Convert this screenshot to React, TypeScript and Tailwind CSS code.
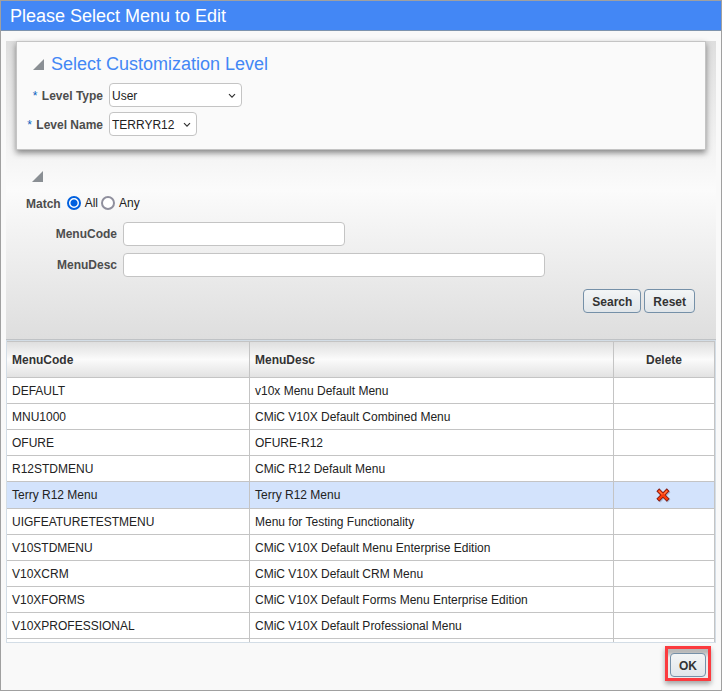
import { useState } from "react";
import type { ReactNode } from "react";
import clsx from "clsx";

type MenuRow = { code: string; desc: string };

const menus: MenuRow[] = [
  { code: "DEFAULT", desc: "v10x Menu Default Menu" },
  { code: "MNU1000", desc: "CMiC V10X Default Combined Menu" },
  { code: "OFURE", desc: "OFURE-R12" },
  { code: "R12STDMENU", desc: "CMiC R12 Default Menu" },
  { code: "Terry R12 Menu", desc: "Terry R12 Menu" },
  { code: "UIGFEATURETESTMENU", desc: "Menu for Testing Functionality" },
  { code: "V10STDMENU", desc: "CMiC V10X Default Menu Enterprise Edition" },
  { code: "V10XCRM", desc: "CMiC V10X Default CRM Menu" },
  { code: "V10XFORMS", desc: "CMiC V10X Default Forms Menu Enterprise Edition" },
  { code: "V10XPROFESSIONAL", desc: "CMiC V10X Default Professional Menu" },
];

function Disclosure({ label }: { label: string }) {
  return (
    <button type="button" aria-label={label} className="block shrink-0">
      <svg width="11" height="11" viewBox="0 0 11 11" className="block">
        <path d="M11 0V11H0Z" fill="#8a8f94" />
      </svg>
    </button>
  );
}

function SelectField({ id, label, value, width }: { id: string; label: string; value: string; width: string }) {
  return (
    <div className="flex items-center gap-[6px]">
      <label htmlFor={id} className="w-[86px] pt-px text-right font-bold text-[#4d4d4d]">
        <span className="mr-px font-normal text-[#0a5fbf]">*</span> {label}
      </label>
      <div className={clsx("relative h-6", width)}>
        <select
          id={id}
          defaultValue={value}
          className="block h-full w-full appearance-none rounded border border-[#c4c4c4] bg-white pt-px pl-[2px] text-[#222]"
        >
          <option>{value}</option>
        </select>
        <svg width="8" height="6" viewBox="0 0 8 6" className="pointer-events-none absolute top-[10px] right-[6px]">
          <path d="M1 1.2L4 4.2L7 1.2" fill="none" stroke="#333" strokeWidth="1.2" />
        </svg>
      </div>
    </div>
  );
}

function MatchRadio({ label, checked, onChange }: { label: string; checked: boolean; onChange: () => void }) {
  return (
    <label className="flex items-center gap-1 text-[#222]">
      <input
        type="radio"
        name="match"
        checked={checked}
        onChange={onChange}
        className="size-[14px] appearance-none rounded-full border-2 border-[#8f8f9d] bg-white checked:border-[#0060df] checked:bg-[radial-gradient(circle,#0060df_3px,#fff_4px)]"
      />
      {label}
    </label>
  );
}

function SearchField({ id, label, width }: { id: string; label: string; width: string }) {
  return (
    <div className="flex items-center gap-[6px]">
      <label htmlFor={id} className="w-[91px] shrink-0 text-right font-bold text-[#4d4d4d]">{label}</label>
      <input id={id} type="text" className={clsx("h-6 rounded border border-[#c4c4c4] bg-white px-1", width)} />
    </div>
  );
}

function Button({ children }: { children: ReactNode }) {
  return (
    <button
      type="button"
      className="h-6 rounded border border-[#7590a8] bg-linear-to-b from-[#f3f5f6] to-[#e1e6ea] px-2 pt-px font-bold text-[#333]"
    >
      {children}
    </button>
  );
}

function DeleteIcon() {
  return (
    <svg width="15" height="15" viewBox="0 0 15 15" className="block">
      <path d="M4.4 4.4L11.6 11.6M11.6 4.4L4.4 11.6" stroke="#8fa0bd" strokeWidth="4" strokeLinecap="square" opacity="0.6" />
      <path d="M3.2 3.2L10.8 10.8M10.8 3.2L3.2 10.8" stroke="#7d1a14" strokeWidth="4" strokeLinecap="square" />
      <path d="M3.2 3.2L10.8 10.8M10.8 3.2L3.2 10.8" stroke="#fb3c0c" strokeWidth="2.4" strokeLinecap="square" />
      <path d="M2.8 2.8L6.4 6.4M11 3L8 6" stroke="#ff7a45" strokeWidth="1.1" />
    </svg>
  );
}

export default function App() {
  const [match, setMatch] = useState("all");
  const [selected, setSelected] = useState("Terry R12 Menu");

  return (
    <div className="flex h-screen flex-col border border-[#a0a0a0] bg-[#f9f9f9] font-['Liberation_Sans',Arial,sans-serif] text-xs text-[#333]">
      <header className="h-[30px] shrink-0 border-b border-[#7d93ad] bg-[#4387f5] px-[9px]">
        <h1 className="text-lg leading-[30px] text-white">Please Select Menu to Edit</h1>
      </header>

      <main className="mx-[5px] mt-[10px] flex min-h-0 flex-1 flex-col">
        <div className="shrink-0 border-b border-[#bfc2c5] bg-linear-to-b from-[#dedede] via-[#fbfbfb] to-[#dedede]">
          {/* Customization level */}
          <section className="mx-[10px] border border-[#c4c4c4] bg-[#fafafa] pb-[13px] shadow-[0_3px_6px_rgba(0,0,0,0.45)]">
            <div className="flex items-center gap-[7px] pt-2 pl-4">
              <Disclosure label="Toggle customization level" />
              <h2 className="text-lg leading-7 text-[#4387f5]">Select Customization Level</h2>
            </div>
            <div className="mt-[5px] flex flex-col gap-[5px]">
              <SelectField id="level-type" label="Level Type" value="User" width="w-[133px]" />
              <SelectField id="level-name" label="Level Name" value="TERRYR12" width="w-[88px]" />
            </div>
          </section>

          {/* Search criteria */}
          <section className="pt-[21px] pr-[21px] pb-[26px] pl-[20px]">
            <div className="pl-[6px]">
              <Disclosure label="Toggle search" />
            </div>
            <fieldset className="mt-3 flex h-[18px] items-center">
              <legend className="float-left mr-[6px] pt-px font-bold text-[#4d4d4d]">Match</legend>
              <div className="flex gap-[3px]">
                <MatchRadio label="All" checked={match === "all"} onChange={() => setMatch("all")} />
                <MatchRadio label="Any" checked={match === "any"} onChange={() => setMatch("any")} />
              </div>
            </fieldset>
            <div className="mt-[10px] flex flex-col gap-[7px]">
              <SearchField id="menu-code" label="MenuCode" width="w-[222px]" />
              <SearchField id="menu-desc" label="MenuDesc" width="w-[422px]" />
            </div>
            <div className="mt-3 flex justify-end gap-[3px]">
              <Button>Search</Button>
              <Button>Reset</Button>
            </div>
          </section>
        </div>

        <div className="min-h-0 flex-1 overflow-hidden border border-[#d3dde6] bg-white">
          <table className="w-full table-fixed border-separate border-spacing-0">
            <colgroup>
              <col className="w-[243px]" />
              <col />
              <col className="w-[101px]" />
            </colgroup>
            <thead>
              <tr className="h-[37px] text-left *:border-y *:border-r *:border-[#c4c4c4] *:bg-linear-to-b *:from-[#dfdfdf] *:via-[#fbfbfb] *:to-[#e2e2e2] *:px-[5px]">
                <th>MenuCode</th>
                <th>MenuDesc</th>
                <th className="text-center">Delete</th>
              </tr>
            </thead>
            <tbody>
              {menus.map((m) => {
                const isSelected = m.code === selected;
                return (
                  <tr
                    key={m.code}
                    onClick={() => setSelected(m.code)}
                    className={clsx(
                      "*:border-r *:border-b *:border-[#c4c4c4] *:px-[5px] text-[#222]",
                      isSelected ? "h-[27px] bg-[#d3e3fc]" : "h-[26px]"
                    )}
                  >
                    <td>{m.code}</td>
                    <td>{m.desc}</td>
                    <td>
                      {isSelected && (
                        <button type="button" aria-label={`Delete ${m.code}`} className="mx-auto block pr-[2px]">
                          <DeleteIcon />
                        </button>
                      )}
                    </td>
                  </tr>
                );
              })}
              <tr className="h-[26px] *:border-r *:border-[#c4c4c4]">
                <td />
                <td />
                <td />
              </tr>
            </tbody>
          </table>
        </div>
      </main>

      <footer className="flex shrink-0 justify-end pt-[3px] pr-[10px] pb-[9px]">
        <div className="border-[3px] border-[#fb3b3f] bg-linear-to-b from-[#b9b9b9] from-10% to-[#ececec] to-30% px-[2px] pt-[4px] pb-[1px] shadow-[0_3px_5px_rgba(0,0,0,0.35)]">
          <Button>OK</Button>
        </div>
      </footer>
    </div>
  );
}
